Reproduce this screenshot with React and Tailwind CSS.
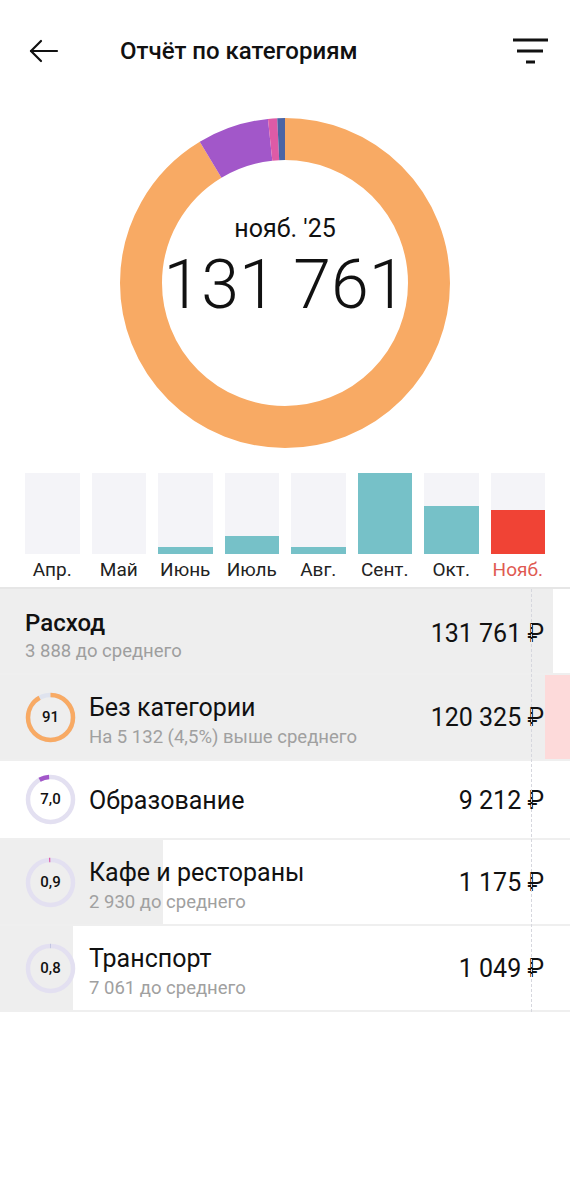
import React from 'react'

const COLORS = {
  orange: '#F8AA64',
  purple: '#A257C9',
  pink: '#DE5BA6',
  blue: '#4B64A4',
}

const TOTAL = 131761

const categories = [
  { name: 'Без категории', amount: 120325, label: '91', color: COLORS.orange, sub: 'На 5 132 (4,5%) выше среднего', bg: 545, over: true, track: '#dfe3ee' },
  { name: 'Образование', amount: 9212, label: '7,0', color: COLORS.purple, sub: null, bg: 0, track: '#e3e0f1' },
  { name: 'Кафе и рестораны', amount: 1175, label: '0,9', color: COLORS.pink, sub: '2 930 до среднего', bg: 163, track: '#e3e0f1' },
  { name: 'Транспорт', amount: 1049, label: '0,8', color: COLORS.blue, sub: '7 061 до среднего', bg: 73, track: '#e3e0f1' },
]

// накопленные доли для сегментов кольца
let acc = 0
const segments = categories.map((c) => {
  const seg = { start: acc / TOTAL, len: c.amount / TOTAL, color: c.color }
  acc += c.amount
  return seg
})

const months = [
  { label: 'Апр.', h: 0 },
  { label: 'Май', h: 0 },
  { label: 'Июнь', h: 7 },
  { label: 'Июль', h: 18 },
  { label: 'Авг.', h: 7 },
  { label: 'Сент.', h: 81 },
  { label: 'Окт.', h: 48 },
  { label: 'Нояб.', h: 44, current: true },
]

const fmt = (n) => n.toLocaleString('ru-RU').replace(/\s/g, ' ')

function Ring({ size, r, stroke, segs, track }) {
  const c = 2 * Math.PI * r
  const mid = size / 2
  return (
    <svg width={size} height={size} viewBox={`0 0 ${size} ${size}`}>
      {track ? <circle cx={mid} cy={mid} r={r} fill="none" stroke={track} strokeWidth={stroke} /> : null}
      <g transform={`rotate(-90 ${mid} ${mid})`}>
        {segs.map((s, i) => (
          <circle
            key={i}
            cx={mid}
            cy={mid}
            r={r}
            fill="none"
            stroke={s.color}
            strokeWidth={stroke}
            strokeDasharray={`${s.len * c} ${c}`}
            strokeDashoffset={-s.start * c}
          />
        ))}
      </g>
    </svg>
  )
}

function Header() {
  return (
    <div className="flex h-[102px] items-center pl-[29px] pr-[20px]">
      <svg width="30" height="24" viewBox="0 0 30 24" fill="none" stroke="#111" strokeWidth="2.2" strokeLinecap="round" strokeLinejoin="round">
        <path d="M2 12H28" />
        <path d="M12 2L2 12L12 22" />
      </svg>
      <h1 className="ml-[61px] flex-1 text-[24px] font-medium text-[#111]">Отчёт по категориям</h1>
      <svg width="40" height="30" viewBox="0 0 40 30" fill="none" stroke="#111" strokeWidth="3">
        <path d="M3 4H38" />
        <path d="M7 15H33" />
        <path d="M16 26H25" />
      </svg>
    </div>
  )
}

function Donut() {
  return (
    <div className="mt-[16px] flex justify-center">
      <div className="relative h-[330px] w-[330px]">
        <Ring size={330} r={144} stroke={42} segs={segments} />
        <div className="absolute inset-0 flex flex-col items-center pt-[95px]">
          <div className="text-[25px] leading-[32px] text-[#111]">нояб. '25</div>
          <div className="mt-[3px] text-[68px] font-light leading-[74px] text-[#111]">131 761</div>
        </div>
      </div>
    </div>
  )
}

function Bars() {
  return (
    <div className="mt-[25px] grid grid-cols-8 gap-x-[12px] px-[25px]">
      {months.map((m) => (
        <div key={m.label} className="flex flex-col items-center">
          <div className="flex h-[81px] w-full flex-col justify-end bg-[#f4f4f8]">
            {m.h ? (
              <div className={m.current ? 'bg-[#F04335]' : 'bg-[#76C1C8]'} style={{ height: m.h }} />
            ) : null}
          </div>
          <div className={'mt-[4px] whitespace-nowrap text-[19px] leading-[24px] ' + (m.current ? 'text-[#E05A52]' : 'text-[#222]')}>
            {m.label}
          </div>
        </div>
      ))}
    </div>
  )
}

function Row({ bg, over, children, tall = true }) {
  return (
    <div className={'relative border-b-2 border-[#efefef] ' + (tall ? 'h-[86px]' : 'h-[79px]')}>
      {bg ? <div className="absolute inset-y-0 left-0 bg-[#eeeeee]" style={{ width: bg }} /> : null}
      {over ? <div className="absolute inset-y-0 right-0 bg-[#FDDADA]" style={{ left: bg }} /> : null}
      <div className="relative flex h-full items-center pl-[25px] pr-[26px]">{children}</div>
    </div>
  )
}

function List() {
  return (
    <div className="relative mt-[5px] border-t-2 border-[#e6e6e6]">
      <div className="absolute bottom-0 left-[531px] top-0 z-10 border-l-[1.5px] border-dashed border-[#d6d7de]" />
      <Row bg={553}>
        <div className="flex-1 pt-[9px]">
          <div className="text-[24px] font-medium leading-[30px] text-[#111]">Расход</div>
          <div className="text-[18.5px] leading-[26px] text-[#9e9e9e]">3 888 до среднего</div>
        </div>
        <div className="pt-[6px] text-[25px] text-[#111]">{fmt(TOTAL)} ₽</div>
      </Row>
      {categories.map((c, i) => (
        <Row key={c.name} bg={c.bg} over={c.over} tall={!!c.sub}>
          <div className="relative h-[51px] w-[51px] shrink-0">
            <Ring size={51} r={22.5} stroke={4.5} segs={[segments[i]]} track={c.track} />
            <div className="absolute inset-0 flex items-center justify-center text-[15px] font-medium text-[#111]">{c.label}</div>
          </div>
          <div className={'ml-[13px] flex-1 ' + (c.sub ? 'pt-[7px]' : 'pt-[2px]')}>
            <div className="text-[25px] leading-[32px] text-[#111]">{c.name}</div>
            {c.sub ? <div className="text-[18.5px] leading-[26px] text-[#a0a0a0]">{c.sub}</div> : null}
          </div>
          <div className="pt-[2px] text-[25px] text-[#111]">{fmt(c.amount)} ₽</div>
        </Row>
      ))}
    </div>
  )
}

export default function App() {
  return (
    <div className="min-h-[1200px] w-[570px] bg-white font-['Roboto','Noto_Sans',sans-serif]">
      <Header />
      <Donut />
      <Bars />
      <List />
    </div>
  )
}
